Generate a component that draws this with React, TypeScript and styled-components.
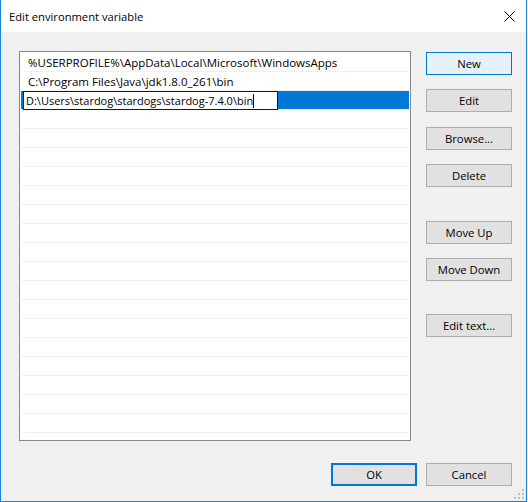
import React from 'react';
import styled, { createGlobalStyle } from 'styled-components';

const GlobalStyle = createGlobalStyle`
  html, body {
    margin: 0;
    padding: 0;
    background: #ffffff;
  }
  * {
    box-sizing: border-box;
  }
`;

const paths = [
    '%USERPROFILE%\\AppData\\Local\\Microsoft\\WindowsApps',
    'C:\\Program Files\\Java\\jdk1.8.0_261\\bin',
    'D:\\Users\\stardog\\stardogs\\stardog-7.4.0\\bin',
];

const EDITING = 2;
const ROW_COUNT = 21;

const sideButtons = [
    { label: 'New', gap: 0, primary: true },
    { label: 'Edit', gap: 14 },
    { label: 'Browse...', gap: 15 },
    { label: 'Delete', gap: 14 },
    { label: 'Move Up', gap: 34 },
    { label: 'Move Down', gap: 14 },
    { label: 'Edit text...', gap: 33 },
];

const Window = styled.div`
  position: relative;
  width: 527px;
  height: 502px;
  display: flex;
  flex-direction: column;
  background: #f0f0f0;
  border: 1px solid #1883d7;
  border-top: none;
  font-family: "Open Sans", "Noto Sans", sans-serif;
  font-size: 11.3px;
  color: #000000;
`;

const TitleBar = styled.div`
  height: 32px;
  display: flex;
  align-items: center;
  background: #ffffff;
  padding-left: 8px;
`;

const Title = styled.span`
  flex: 1;
  font-size: 11.2px;
`;

const CloseButton = styled.div`
  width: 46px;
  height: 32px;
  display: flex;
  align-items: center;
  justify-content: center;
  margin-right: -6px;
`;

const Body = styled.div`
  display: flex;
  gap: 15px;
  padding: 19px 14px 0 18px;
`;

const ListBox = styled.div`
  width: 392px;
  height: 390px;
  border: 1px solid #828790;
  background: #ffffff;
  padding-top: 1px;
  overflow: hidden;
`;

const Row = styled.div<{ $selected?: boolean }>`
  height: 19px;
  margin: 0 1px;
  display: flex;
  align-items: center;
  padding-left: ${({ $selected }) => ($selected ? '2px' : '7px')};
  border-bottom: 1px solid #f0f0f0;
  background: ${({ $selected }) => ($selected ? '#0078d7' : 'transparent')};
  font-size: 11.5px;
  white-space: nowrap;
`;

const Editor = styled.div`
  width: 255px;
  height: 19px;
  margin-bottom: -1px;
  align-self: flex-start;
  display: flex;
  align-items: center;
  padding-left: 2px;
  background: #ffffff;
  border: 1px solid #1a1a1a;
  font-size: 11px;
`;

const Caret = styled.span`
  display: inline-block;
  width: 1px;
  height: 14px;
  background: #000000;
`;

const ButtonColumn = styled.div`
  display: flex;
  flex-direction: column;
  width: 86px;
  padding-top: 1px;
`;

const Button = styled.div<{ $gap?: number; $primary?: boolean; $focused?: boolean }>`
  width: 86px;
  height: 23px;
  margin-top: ${({ $gap }) => $gap ?? 0}px;
  display: flex;
  align-items: center;
  justify-content: center;
  background: ${({ $primary }) => ($primary ? '#e5f1fb' : '#e1e1e1')};
  border: ${({ $primary, $focused }) =>
        $focused ? '2px solid #0078d7' : $primary ? '1px solid #0078d7' : '1px solid #adadad'};
`;

const Footer = styled.div`
  display: flex;
  justify-content: flex-end;
  gap: 9px;
  padding: 22px 14px 0 0;
`;

const Grip = styled.svg`
  position: absolute;
  right: 2px;
  bottom: 2px;
`;

const CloseIcon = () => (
    <svg width="11" height="11" viewBox="0 0 11 11">
        <path d="M0.5 0.5 L10.5 10.5 M10.5 0.5 L0.5 10.5" stroke="#000" strokeWidth="1" fill="none" />
    </svg>
);

const SizeGrip = () => (
    <Grip width="10" height="10" viewBox="0 0 10 10">
        {[[8, 0], [8, 4], [4, 4], [8, 8], [4, 8], [0, 8]].map(([x, y]) => (
            <rect key={`${x}-${y}`} x={x} y={y} width="2" height="2" fill="#bfbfbf" />
        ))}
    </Grip>
);

export default function App() {
    const rows = Array.from({ length: ROW_COUNT }, (_, i) => paths[i] ?? '');

    return (
        <>
            <GlobalStyle />
            <Window>
                <TitleBar>
                    <Title>Edit environment variable</Title>
                    <CloseButton>
                        <CloseIcon />
                    </CloseButton>
                </TitleBar>
                <Body>
                    <ListBox>
                        {rows.map((text, i) =>
                            i === EDITING ? (
                                <Row key={i} $selected>
                                    <Editor>
                                        {text}
                                        <Caret />
                                    </Editor>
                                </Row>
                            ) : (
                                <Row key={i}>{text}</Row>
                            ),
                        )}
                    </ListBox>
                    <ButtonColumn>
                        {sideButtons.map(({ label, gap, primary }) => (
                            <Button key={label} $gap={gap} $primary={primary}>
                                {label}
                            </Button>
                        ))}
                    </ButtonColumn>
                </Body>
                <Footer>
                    <Button $focused>OK</Button>
                    <Button>Cancel</Button>
                </Footer>
                <SizeGrip />
            </Window>
        </>
    );
}
